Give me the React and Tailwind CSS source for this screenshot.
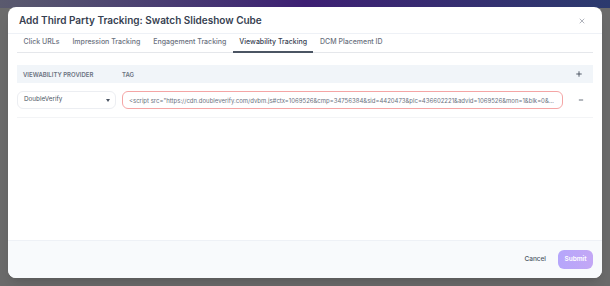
import { X, Plus, Minus } from 'lucide-react'

const TABS = ['Click URLs', 'Impression Tracking', 'Engagement Tracking', 'Viewability Tracking', 'DCM Placement ID']

const TAG = '<script src="https://cdn.doubleverify.com/dvbm.js#ctx=1069526&cmp=34756384&sid=4420473&plc=436602221&advid=1069526&mon=1&blk=0&gdpr=0"></script>'

export default function App() {
  return (
    <div
      className="relative w-[610px] h-[286px] overflow-hidden bg-[#6b6b6b]"
      style={{ fontFamily: 'Inter, "Noto Sans", sans-serif' }}
    >
      {/* page behind the overlay */}
      <div className="absolute left-0 top-0 w-full h-[8px] bg-gradient-to-r from-[#5a5a6e] via-[#3d1f73] to-[#2b3a6e]" />
      <div className="absolute left-[8px] top-[7px] w-[594px] h-[271px] bg-white rounded-[8px] flex flex-col overflow-hidden shadow-lg">
        {/* Header */}
        <div className="flex items-center justify-between h-[27px] pl-[11px] pr-[16px] pt-[1px] border-b border-[#eef1f6]">
          <h2 className="text-[10px] font-semibold text-[#374151]">Add Third Party Tracking: Swatch Slideshow Cube</h2>
          <X className="w-[8px] h-[8px] text-[#6b7280]" strokeWidth={1.6} />
        </div>

        {/* Tabs */}
        <div className="mx-[9px] flex border-b border-[#e5e7eb] h-[19px]">
          {TABS.map((t) => (
            <div
              key={t}
              className={`px-[6.5px] flex items-center text-[7px] font-medium -mb-px border-b-2 ${
                t === 'Viewability Tracking' ? 'border-[#4b5563] text-[#374151]' : 'border-transparent text-[#6b7280]'
              }`}
            >
              {t}
            </div>
          ))}
        </div>

        {/* Table */}
        <div className="mx-[9px] mt-[12px]">
          <div className="flex items-center h-[18px] bg-[#f1f5f9] pr-[10px]">
            <div className="w-[105px] pl-[6px] text-[6px] font-semibold uppercase text-[#6b7280]">Viewability Provider</div>
            <div className="flex-1 text-[6px] font-semibold uppercase text-[#6b7280]">Tag</div>
            <Plus className="w-[8px] h-[8px] text-[#374151]" strokeWidth={2.5} />
          </div>
          <div className="flex items-center gap-[6px] pt-[8px] pb-[8px] border-b border-[#f3f4f6]">
            <div className="w-[99px] h-[18px] rounded-[6px] border border-[#eceef2] flex items-center justify-between pl-[6px] pr-[5px]">
              <span className="text-[6.3px] text-[#4b5563]">DoubleVerify</span>
              <svg width="4" height="3" viewBox="0 0 4 3"><path d="M0 0h4L2 3z" fill="#4b5563" /></svg>
            </div>
            <div className="w-[441px] h-[18px] rounded-[6px] border border-[#f4a5a5] flex items-center px-[6px] overflow-hidden">
              <span className="text-[6px] text-[#6b7280] whitespace-nowrap overflow-hidden text-ellipsis">{TAG}</span>
            </div>
            <div className="flex-1 flex justify-center">
              <Minus className="w-[6px] h-[6px] text-[#374151]" strokeWidth={3} />
            </div>
          </div>
        </div>

        <div className="flex-1" />

        {/* Footer */}
        <div className="h-[38px] bg-[#f8fafc] border-t border-[#eef1f6] flex items-center justify-end pr-[9px] gap-[12px]">
          <button className="text-[6.5px] text-[#4b5563] font-medium">Cancel</button>
          <button className="w-[35px] h-[19px] rounded-[6px] bg-gradient-to-r from-[#b5a6fb] to-[#c3a7f5] text-white text-[6.5px] font-semibold">
            Submit
          </button>
        </div>
      </div>
    </div>
  )
}
